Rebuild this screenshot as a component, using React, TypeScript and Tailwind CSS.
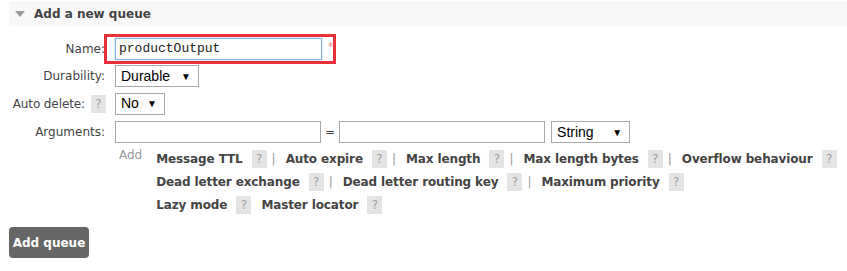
import React from "react";

const Help = () => (
  <span className="inline-flex shrink-0 items-center justify-center w-[15px] h-[18px] bg-[#e4e4e4] text-[#a0a0a0] text-[12px] font-normal tracking-normal">?</span>
);

const Sel = ({ text, w }: { text: string; w: string }) => (
  <div className={`${w} h-[22px] border border-[#a9a9a9] bg-white flex items-center justify-between pl-[5px] pr-[7px] text-[14px] text-black`} style={{ fontFamily: '"Liberation Sans", Arial, sans-serif' }}>
    <span>{text}</span>
    <span className="text-[10px]">▼</span>
  </div>
);

const Arg = ({ label, pipe = true }: { label: string; pipe?: boolean }) => (
  <span className="inline-flex items-center shrink-0 whitespace-nowrap">
    <span className="font-bold text-[#444] tracking-[-0.12px]">{label}</span>
    <span className="ml-[9px]"><Help /></span>
    {pipe && <span className="ml-[5px] mr-[10px] text-[#999]">|</span>}
    {!pipe && <span className="mr-[10px]" />}
  </span>
);

export default function App() {
  return (
    <div className="w-[847px] h-[271px] bg-white text-[12px] text-[#444] relative overflow-hidden whitespace-nowrap" style={{ fontFamily: '"DejaVu Sans", Verdana, sans-serif' }}>
      <div className="ml-[9px] mt-[1px] h-[25px] bg-[#f8f8f8] flex items-center">
        <span className="ml-[6px] w-0 h-0 border-l-[5px] border-r-[5px] border-t-[6px] border-l-transparent border-r-transparent border-t-[#999]" />
        <span className="ml-[9px] font-bold text-[12px] text-[#444]">Add a new queue</span>
      </div>

      <div className="mt-[12px] flex items-center h-[22px]">
        <div className="w-[105px] text-right">Name:</div>
        <div className="ml-[10px] relative">
          <div className="w-[207px] h-[22px] border border-[#7fb6e6] shadow-[0_0_2px_#9cc8ee] flex items-center pl-[3px] text-[13px] text-[#222]" style={{ fontFamily: '"Liberation Mono", "Courier New", monospace' }}>productOutput</div>
          <div className="absolute left-[-11px] top-[-4px] w-[232px] h-[30px] border-[3px] border-[#e8313a]" />
          <span className="absolute left-[213px] top-[1px] text-[#f08080] text-[10px]">*</span>
        </div>
      </div>

      <div className="mt-[5px] flex items-center h-[22px]">
        <div className="w-[105px] text-right">Durability:</div>
        <div className="ml-[10px]"><Sel text="Durable" w="w-[84px]" /></div>
      </div>

      <div className="mt-[5px] flex items-center h-[23px]">
        <div className="w-[105px] flex justify-end items-center">
          <span className="tracking-[-0.1px]">Auto delete:</span>
          <span className="ml-[6px] mr-[-1px]"><Help /></span>
        </div>
        <div className="ml-[10px]"><Sel text="No" w="w-[50px]" /></div>
      </div>

      <div className="mt-[6px] flex items-center h-[22px]">
        <div className="w-[105px] text-right">Arguments:</div>
        <div className="ml-[10px] flex items-center">
          <div className="w-[206px] h-[22px] border border-[#a9a9a9]" />
          <span className="ml-[4px] mr-[4px]">=</span>
          <div className="w-[206px] h-[22px] border border-[#a9a9a9]" />
          <div className="ml-[6px]"><Sel text="String" w="w-[79px]" /></div>
        </div>
      </div>

      <div className="mt-[7px] flex">
        <div className="ml-[119px] text-[#999] mt-[-4px]">Add</div>
        <div className="ml-[14px] flex flex-col gap-[5px]">
          <div className="flex items-center h-[18px]">
            <Arg label="Message TTL" />
            <Arg label="Auto expire" />
            <Arg label="Max length" />
            <Arg label="Max length bytes" />
            <Arg label="Overflow behaviour" pipe={false} />
          </div>
          <div className="flex items-center h-[18px]">
            <Arg label="Dead letter exchange" />
            <Arg label="Dead letter routing key" />
            <Arg label="Maximum priority" pipe={false} />
          </div>
          <div className="flex items-center h-[18px]">
            <Arg label="Lazy mode" pipe={false} />
            <Arg label="Master locator" pipe={false} />
          </div>
        </div>
      </div>

      <div className="mt-[13px] ml-[9px]">
        <div className="w-[80px] h-[31px] rounded-[4px] bg-[#666] text-white font-bold text-[12px] flex items-center justify-center">Add queue</div>
      </div>
    </div>
  );
}
